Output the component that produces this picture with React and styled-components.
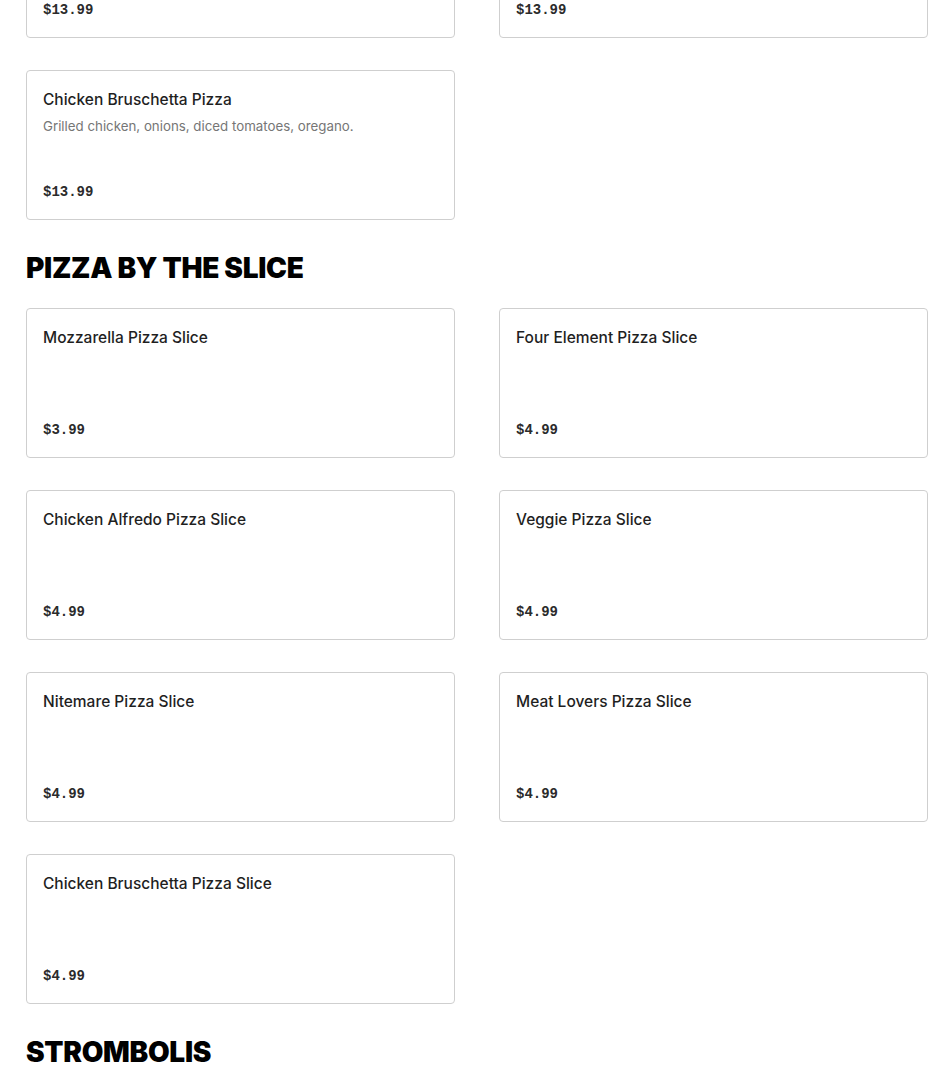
import React from "react";
import styled, { createGlobalStyle } from "styled-components";

const Global = createGlobalStyle`
  html, body { margin: 0; padding: 0; background: #fff; }
  body { font-family: Inter, "Liberation Sans", Arial, sans-serif; color: #1f1f1f; overflow: hidden; }
`;

const Page = styled.main`
  width: 902px;
  padding: 0 22px 0 26px;
  margin-top: -112px;
`;

const Section = styled.section`
  display: flex;
  flex-direction: column;
`;

const Heading = styled.h2`
  margin: 30px 0 22px;
  font-family: Inter, "Liberation Sans", Arial, sans-serif;
  font-weight: 900;
  font-size: 28px;
  line-height: 36px;
  letter-spacing: -0.3px;
  color: #000;
  text-transform: uppercase;
`;

const Grid = styled.div`
  display: grid;
  grid-template-columns: 1fr 1fr;
  column-gap: 44px;
  row-gap: 32px;
`;

const Card = styled.article`
  box-sizing: border-box;
  height: 150px;
  border: 1px solid #cfcfcf;
  border-radius: 4px;
  padding: 16px;
  display: flex;
  flex-direction: column;
  background: #fff;
`;

const Title = styled.h3`
  margin: 0;
  font-size: 15.5px;
  line-height: 25px;
  font-weight: 500;
  color: #1f1f1f;
`;

const Desc = styled.p`
  margin: 3px 0 0;
  font-size: 13.3px;
  line-height: 22px;
  color: #767676;
`;

const Price = styled.span`
  margin-top: auto;
  font-family: "Liberation Mono", "DejaVu Sans Mono", monospace;
  font-weight: 700;
  font-size: 14px;
  line-height: 22px;
  color: #2b2b2b;
`;

const sections = [
  {
    name: null,
    items: [
      { title: "Meat Lovers Pizza", price: "$13.99" },
      { title: "Veggie Pizza", price: "$13.99" },
      { title: "Chicken Bruschetta Pizza", desc: "Grilled chicken, onions, diced tomatoes, oregano.", price: "$13.99" },
    ],
  },
  {
    name: "Pizza by the Slice",
    items: [
      { title: "Mozzarella Pizza Slice", price: "$3.99" },
      { title: "Four Element Pizza Slice", price: "$4.99" },
      { title: "Chicken Alfredo Pizza Slice", price: "$4.99" },
      { title: "Veggie Pizza Slice", price: "$4.99" },
      { title: "Nitemare Pizza Slice", price: "$4.99" },
      { title: "Meat Lovers Pizza Slice", price: "$4.99" },
      { title: "Chicken Bruschetta Pizza Slice", price: "$4.99" },
    ],
  },
  { name: "Strombolis", items: [] },
];

export default function App() {
  return (
    <>
      <Global />
      <Page>
        {sections.map((s, i) => (
          <Section key={i}>
            {s.name && <Heading>{s.name}</Heading>}
            {s.items.length > 0 && (
              <Grid>
                {s.items.map((it) => (
                  <Card key={it.title}>
                    <Title>{it.title}</Title>
                    {it.desc && <Desc>{it.desc}</Desc>}
                    <Price>{it.price}</Price>
                  </Card>
                ))}
              </Grid>
            )}
          </Section>
        ))}
      </Page>
    </>
  );
}
